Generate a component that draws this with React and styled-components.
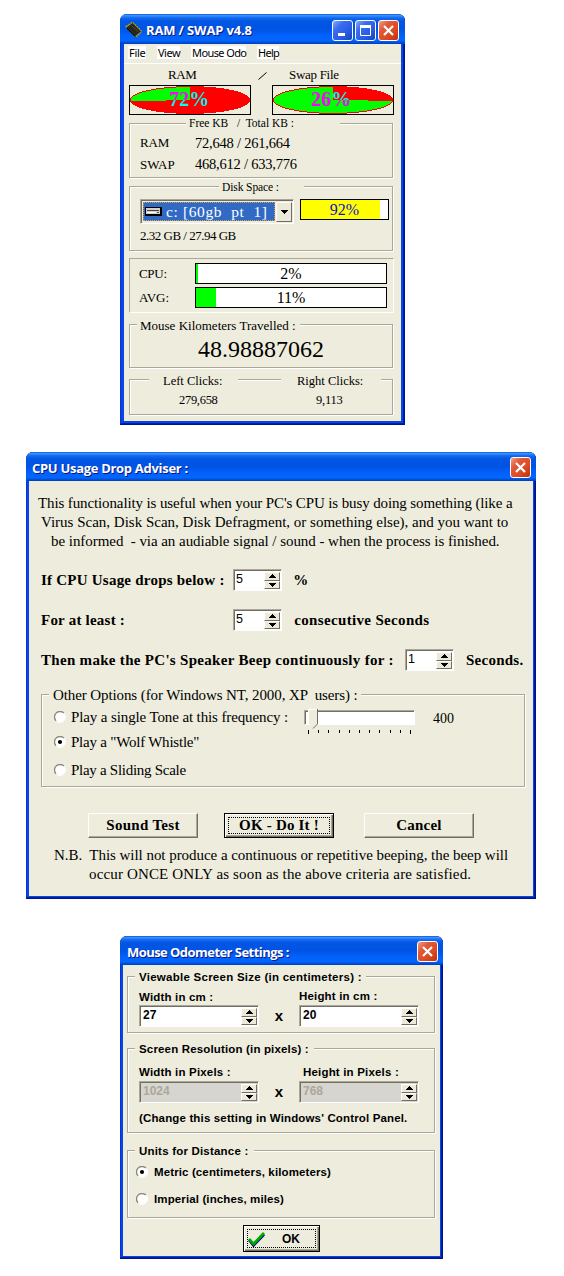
import React from "react";
import styled, { createGlobalStyle, css } from "styled-components";

const FACE = "#eeeddd";
const LINE = "#aca899";

const Global = createGlobalStyle`
  *, *::before, *::after { box-sizing: border-box; }
  body { margin: 0; background: #fff; color: #000; font-family: "Liberation Serif", "Times New Roman", serif; }
`;

const Page = styled.main`
  width: 564px;
  height: 1276px;
  padding-top: 14px;
  overflow: hidden;
`;

const Window = styled.section`
  width: ${(p) => p.$w}px;
  height: ${(p) => p.$h}px;
  margin: 0 0 ${(p) => p.$after || 0}px ${(p) => p.$left}px;
  padding: 0 ${(p) => p.$edge}px ${(p) => p.$edge}px;
  border-radius: 7px 7px 0 0;
  overflow: hidden;
  background: #0546e4;
  box-shadow: inset -1px -1px 0 #00138c, inset 1px 0 0 #0831d9, inset -2px -2px 0 #001ea0;
`;

const TitleBar = styled.header`
  display: flex;
  align-items: center;
  height: ${(p) => p.$h}px;
  margin: 0 -${(p) => p.$edge}px;
  padding: ${(p) => p.$pad};
  color: #fff;
  background: linear-gradient(180deg, #0a53d6 0, #3a93ff 5%, #1469f0 13%, #0256e2 24%, #0054e3 50%, #0261fb 72%, #0266ff 88%, #0050d8 95%, #003bb8 100%);
`;

const TitleText = styled.h1`
  flex: 1;
  margin: 0;
  font: 700 13px/18px "Open Sans", sans-serif;
  letter-spacing: ${(p) => p.$ls}px;
  padding-left: ${(p) => p.$gap || 0}px;
  white-space: pre;
  text-shadow: 1px 1px 0 #0a1883;
`;

const CaptionButton = styled.button`
  display: grid;
  place-items: center;
  width: 21px;
  height: 21px;
  margin: 0 0 0 2px;
  padding: 0;
  border: 1px solid #fff;
  border-radius: 3px;
  background: ${(p) =>
    p.$close
      ? "linear-gradient(135deg, #f0a088 0, #e1593a 30%, #dc4a22 65%, #b93210 100%)"
      : "linear-gradient(135deg, #87aef8 0, #3a6df0 30%, #2a5ce4 65%, #1941b8 100%)"};
`;

const Body = styled.div`
  height: calc(100% - ${(p) => p.$title}px);
  padding: ${(p) => p.$pad};
  background: ${FACE};
`;

const Menu = styled.nav`
  display: flex;
  align-items: flex-start;
  gap: 11px;
  height: 20px;
  margin: 0 -5px;
  padding: 2px 0 0 4px;
  border-bottom: 1px solid #fff;
`;

const MenuItem = styled.a`
  width: ${(p) => p.$w}px;
  height: 13px;
  padding-left: 1px;
  background: #fff;
  font: 11px/13px "Noto Sans", sans-serif;
  letter-spacing: ${(p) => p.$ls}px;
  white-space: nowrap;
`;

const sans = css`
  font-family: "Liberation Sans", Arial, sans-serif;
`;

const Text = styled.span`
  flex: none;
  display: block;
  width: ${(p) => (p.$w ? p.$w + "px" : "auto")};
  font-size: ${(p) => p.$size || 13}px;
  font-weight: ${(p) => (p.$bold ? 700 : 400)};
  letter-spacing: ${(p) => p.$ls || 0}px;
  white-space: pre;
  ${(p) => p.$sans && sans}
`;

const Row = styled.div`
  display: flex;
  align-items: ${(p) => p.$align || "center"};
  height: ${(p) => p.$h}px;
  line-height: ${(p) => p.$lh || p.$h}px;
  margin-top: ${(p) => p.$top || 0}px;
  padding-left: ${(p) => p.$left || 0}px;
`;

const Group = styled.div`
  width: ${(p) => p.$w}px;
  height: ${(p) => p.$h}px;
  margin-top: ${(p) => p.$top || 0}px;
  border: 1px solid ${LINE};
  box-shadow: 1px 1px 0 #fff, inset 1px 1px 0 #fff;
`;

const Legend = styled.div`
  flex: none;
  width: ${(p) => p.$w}px;
  height: ${(p) => p.$h || 14}px;
  line-height: ${(p) => p.$h || 14}px;
  margin: ${(p) => p.$up || 0}px 0 0 ${(p) => p.$left || 0}px;
  padding-left: ${(p) => p.$pad || 0}px;
  background: ${FACE};
`;

const SunkenPanel = styled.div`
  width: 265px;
  height: 55px;
  margin-top: 7px;
  padding: 4px 0 0 9px;
  border: 1px solid;
  border-color: ${LINE} #fff #fff ${LINE};
`;

const Dial = styled.div`
  position: relative;
  width: 122px;
  height: 30px;
  margin-right: 21px;
  border: 1px solid #000;
  isolation: isolate;
  background: ${FACE};
  svg { display: block; }
`;

const DialValue = styled.b`
  position: absolute;
  left: ${(p) => p.$left}px;
  top: 1px;
  font-size: 20px;
  line-height: 24px;
  color: #fff;
  mix-blend-mode: difference;
`;

const Meter = styled.div`
  position: relative;
  flex: none;
  width: ${(p) => p.$w}px;
  height: 21px;
  border: 1px solid #000;
  background: #fff;
  color: ${(p) => p.$ink || "#000"};
  font-size: 16px;
  line-height: ${(p) => p.$lh || 20}px;
  text-align: center;
`;

const MeterFill = styled.div`
  height: 19px;
  background: ${(p) => p.$color};
`;

const MeterText = styled.span`
  position: absolute;
  inset: 0;
`;

const Combo = styled.div`
  display: flex;
  flex: none;
  width: 154px;
  height: 25px;
  margin-right: 6px;
  padding: 1px;
  border: 1px solid;
  border-color: ${LINE} #fff #fff ${LINE};
  background: ${FACE};
  box-shadow: inset 1px 1px 0 #716f64;
`;

const ComboValue = styled.div`
  display: flex;
  align-items: center;
  gap: 4px;
  width: 132px;
  margin: 1px;
  padding-left: 1px;
  border: 1px dotted #e0a040;
  background: #316ac5;
  color: #fff;
  line-height: 18px;
`;

const ComboArrow = styled.div`
  display: grid;
  place-items: center;
  width: 16px;
  height: 20px;
  margin-top: 1px;
  border: 1px solid;
  border-color: #fff #716f64 #716f64 #fff;
  background: #ece9d8;
`;

const Spin = styled.div`
  display: flex;
  justify-content: space-between;
  flex: none;
  width: ${(p) => p.$w}px;
  height: 22px;
  padding: 1px 1px 1px ${(p) => (p.$w > 100 ? 3 : 2)}px;
  border: 1px solid;
  border-color: ${LINE} #fff #fff ${LINE};
  background: ${(p) => (p.$off ? "#d6d5cf" : "#fff")};
  color: ${(p) => (p.$off ? LINE : "#000")};
  box-shadow: inset 1px 1px 0 #716f64;
  line-height: 16px;
`;

const SpinButtons = styled.div`
  display: flex;
  flex-direction: column;
  width: 16px;
  padding-top: 1px;
`;

const SpinButton = styled.div`
  display: grid;
  place-items: center;
  height: 9px;
  border: 1px solid;
  border-color: #fff #716f64 #716f64 #fff;
  background: #ece9d8;
`;

const RadioRow = styled.label`
  display: flex;
  align-items: center;
  flex: none;
  height: ${(p) => p.$h}px;
  line-height: ${(p) => p.$h}px;
  width: ${(p) => (p.$w ? p.$w + "px" : "auto")};
  margin-top: ${(p) => p.$top || 0}px;
  padding-left: ${(p) => p.$left}px;
  svg { margin-right: ${(p) => p.$gap || 5}px; }
`;

const Slider = styled.div`
  flex: none;
  width: 111px;
  margin: 3px 18px 0 0;
`;

const SliderTrack = styled.div`
  position: relative;
  height: 15px;
  border: 1px solid;
  border-color: ${LINE} #fff #fff ${LINE};
  background: #fff;
  box-shadow: inset 1px 1px 0 #716f64;
`;

const Thumb = styled.svg`
  position: absolute;
  left: 3px;
  top: -2px;
`;

const Ticks = styled.div`
  display: flex;
  justify-content: space-between;
  width: 103px;
  margin: 5px 0 0 4px;
`;

const Tick = styled.i`
  width: 1px;
  height: ${(p) => (p.$tall ? 4 : 3)}px;
  background: #000;
`;

const SliderValue = styled(Text)`
  line-height: 24px;
`;

const RaisedText = styled(Text)`
  padding-bottom: 2px;
`;

const Intro = styled.div`
  margin-left: -3px;
`;

const Button = styled.button`
  display: flex;
  align-items: center;
  justify-content: center;
  flex: none;
  width: ${(p) => p.$w || 110}px;
  height: ${(p) => p.$h || 25}px;
  margin: 0 ${(p) => p.$after || 0}px 0 0;
  padding: 0;
  border: 1px solid;
  border-color: #fff #716f64 #716f64 #fff;
  background: ${FACE};
  box-shadow: inset -1px -1px 0 ${LINE};
  color: #000;
  font-family: inherit;
  ${(p) =>
    p.$focus &&
    css`
      border-color: #000;
      box-shadow: inset 1px 1px 0 #fff, inset -1px -1px 0 #716f64, inset -2px -2px 0 ${LINE};
    `}
`;

const FocusRing = styled.span`
  display: flex;
  align-items: center;
  justify-content: ${(p) => (p.$start ? "flex-start" : "center")};
  gap: 17px;
  width: calc(100% - 6px);
  height: calc(100% - 6px);
  border: 1px dotted #000;
`;

const CloseGlyph = () => (
  <svg width="13" height="13" viewBox="0 0 13 13">
    <path d="M2 2 L11 11 M11 2 L2 11" stroke="#fff" strokeWidth="2.2" />
  </svg>
);

const Chip = () => (
  <svg width="18" height="18" viewBox="0 0 18 18">
    <path d="M1.5 5.5 L7.5 1.5 L16.5 10.5 L10.5 16 Z" fill="#d8c020" stroke="#b09c10" strokeDasharray="1.4 1.2" strokeWidth="2" />
    <path d="M2 6 L7.5 2 L16 10.5 L10.5 15 Z" fill="#26261c" />
    <path d="M2 6 L10.5 15 V16.5 L2 8 Z" fill="#000" />
    <path d="M6.5 4.5 L13.5 11" stroke="#4c4c42" strokeWidth="1" />
  </svg>
);

const Pie = ({ free }) => {
  const a = (1 - free) * Math.PI * 2;
  const x = 60 + 60 * Math.sin(a);
  const y = 14 - 13.5 * Math.cos(a);
  return (
    <svg width="120" height="28" viewBox="0 0 120 28" shapeRendering="crispEdges">
      <ellipse cx="60" cy="14" rx="60" ry="13.5" fill="#f00" />
      <path d={`M60 14 L${x} ${y} A60 13.5 0 ${free > 0.5 ? 1 : 0} 1 60 .5 Z`} fill="#0f0" />
      <ellipse cx="60" cy="14" rx="59.5" ry="13.4" fill="none" stroke="#f00" />
    </svg>
  );
};

const Drive = () => (
  <svg width="17" height="9" viewBox="0 0 17 9" shapeRendering="crispEdges">
    <rect width="17" height="9" rx="1" fill="#000" />
    <rect x="1" y="1" width="14" height="6" fill="#d4d0c8" />
    <rect x="2" y="3" width="12" height="1" fill="#444" />
    <rect x="2" y="5" width="9" height="1" fill="#fff" />
    <rect x="12" y="5" width="2" height="1" fill="#555" />
  </svg>
);

const Slash = styled.svg`
  margin: 2px 22px 0 0;
`;

const Arrow = ({ up }) => (
  <svg width="7" height="4" viewBox="0 0 7 4" shapeRendering="crispEdges">
    <path d={up ? "M0 4 L3.5 0 L7 4 Z" : "M0 0 L7 0 L3.5 4 Z"} fill="#000" />
  </svg>
);

const RadioDot = ({ on }) => (
  <svg width="12" height="12" viewBox="0 0 12 12">
    <circle cx="6" cy="6" r="5" fill="#fff" />
    <path d="M2.1 9.9 A5.5 5.5 0 0 1 9.9 2.1" fill="none" stroke="#8a877a" strokeWidth="1.3" />
    <path d="M9.9 2.1 A5.5 5.5 0 0 1 2.1 9.9" fill="none" stroke="#fff" strokeWidth="1" />
    {on && <circle cx="6" cy="6" r="2.1" fill="#000" />}
  </svg>
);

const Check = () => (
  <svg width="17" height="16" viewBox="0 0 17 16">
    <path d="M1 9 L5.5 14.5 L16 3.5" fill="none" stroke="#000080" strokeWidth="2.6" />
    <path d="M1 8 L5.5 13 L16 2" fill="none" stroke="#00a800" strokeWidth="2.8" />
  </svg>
);

const Spinner = ({ value, w = 49, off, bold }) => (
  <Spin $w={w} $off={off}>
    <Text $sans $size={bold ? 12 : 12.5} $bold={bold}>{value}</Text>
    <SpinButtons>
      <SpinButton><Arrow up /></SpinButton>
      <SpinButton><Arrow /></SpinButton>
    </SpinButtons>
  </Spin>
);

const Times = () => <Text $w={40} $sans $bold $size={15} $ls={-0.2}>{"    x"}</Text>;

const Close = () => (
  <CaptionButton $close aria-label="Close"><CloseGlyph /></CaptionButton>
);

const RamWindow = () => (
  <Window $w={285} $h={411} $left={120} $after={27} $edge={4}>
    <TitleBar $h={30} $edge={4} $pad="2px 6px 0 5px">
      <Chip />
      <TitleText $ls={-0.15} $gap={3}>RAM / SWAP v4.8</TitleText>
      <CaptionButton aria-label="Minimize">
        <svg width="13" height="13"><rect x="2" y="9" width="7" height="3" fill="#fff" /></svg>
      </CaptionButton>
      <CaptionButton aria-label="Maximize">
        <svg width="13" height="13"><path d="M1.5 1 V11.5 H11.5 V1" fill="none" stroke="#fff" /><rect x="1" y="1" width="11" height="3" fill="#fff" /></svg>
      </CaptionButton>
      <Close />
    </TitleBar>
    <Body $title={30} $pad="0 5px">
      <Menu>
        <MenuItem $w={18} $ls={-0.3}>File</MenuItem>
        <MenuItem $w={23} $ls={-0.5}>View</MenuItem>
        <MenuItem $w={55} $ls={-0.6}>Mouse Odo</MenuItem>
        <MenuItem $w={22} $ls={-0.7}>Help</MenuItem>
      </Menu>
      <Row $h={21} $lh={23} $left={39}>
        <Text $w={90} $size={13} $ls={-0.4}>RAM</Text>
        <Slash width="9" height="8"><path d="M.5 7.5 L8.5 .5" stroke="#000" /></Slash>
        <Text $size={13} $ls={-0.3}>Swap File</Text>
      </Row>
      <Row $h={30}>
        <Dial><Pie free={0.265} /><DialValue $left={39}>72%</DialValue></Dial>
        <Dial><Pie free={0.74} /><DialValue $left={38}>26%</DialValue></Dial>
      </Row>
      <Group $w={264} $h={55} $top={8}>
        <Legend $w={154} $left={56} $up={-8} $pad={3}><Text $size={11.5}>{"Free KB   /  Total KB :"}</Text></Legend>
        <Row $h={22} $top={2} $left={10}><Text $w={55} $ls={-0.2}>RAM</Text><Text $size={14.5} $ls={-0.22}>72,648 / 261,664</Text></Row>
        <Row $h={21} $left={10}><Text $w={55}>SWAP</Text><Text $size={14.5} $ls={-0.22}>468,612 / 633,776</Text></Row>
      </Group>
      <Group $w={264} $h={65} $top={8}>
        <Legend $w={85} $left={89} $up={-7} $pad={3}><Text $size={11.5} $ls={-0.1}>Disk Space :</Text></Legend>
        <Row $h={24} $top={5} $left={10} $align="flex-start">
          <Combo>
            <ComboValue><Drive /><Text $size={15.5} $ls={0.62}>c: [60gb  pt  1]</Text></ComboValue>
            <ComboArrow><Arrow /></ComboArrow>
          </Combo>
          <Meter $w={89} $lh={19} $ink="#1010d0"><MeterFill $color="#ff0" style={{ width: "91%" }} /><MeterText>92%</MeterText></Meter>
        </Row>
        <Row $h={22} $top={2} $left={10}><Text $size={13} $ls={-0.5}>2.32 GB / 27.94 GB</Text></Row>
      </Group>
      <SunkenPanel>
        <Row $h={21}><Text $w={56} $ls={-0.3}>CPU:</Text><Meter $w={192}><MeterFill $color="#0f0" style={{ width: "1.2%" }} /><MeterText>2%</MeterText></Meter></Row>
        <Row $h={21} $top={3}><Text $w={56}>AVG:</Text><Meter $w={192}><MeterFill $color="#0f0" style={{ width: "10.6%" }} /><MeterText>11%</MeterText></Meter></Row>
      </SunkenPanel>
      <Group $w={264} $h={44} $top={11}>
        <Legend $w={163} $h={16} $left={7} $up={-7} $pad={3}><Text $size={13}>Mouse Kilometers Travelled :</Text></Legend>
        <Row $h={30} $left={68}><Text $size={24}>48.98887062</Text></Row>
      </Group>
      <Group $w={264} $h={36} $top={11}>
        <Row $h={16} $top={-7}>
          <Legend $w={89} $h={16} $left={19} $pad={14}><Text $size={12.5}>Left Clicks:</Text></Legend>
          <Legend $w={100} $h={16} $left={43} $pad={16}><Text $size={12.5}>Right Clicks:</Text></Legend>
        </Row>
        <Row $h={20} $top={1} $left={49}><Text $w={137} $size={12.5} $ls={-0.3}>279,658</Text><Text $size={12.5} $ls={-0.2}>9,113</Text></Row>
      </Group>
    </Body>
  </Window>
);

const AdviserWindow = () => (
  <Window $w={510} $h={447} $left={26} $after={37} $edge={3}>
    <TitleBar $h={29} $edge={3} $pad="2px 5px 0 6px">
      <TitleText $ls={-0.3}>CPU Usage Drop Adviser :</TitleText>
      <Close />
    </TitleBar>
    <Body $title={29} $pad="13px 0 0 12px">
      <Intro>
        <Row $h={19}><Text $size={15} $ls={-0.12}>This functionality is useful when your PC's CPU is busy doing something (like a</Text></Row>
        <Row $h={19} $left={3}><Text $size={15}>Virus Scan, Disk Scan, Disk Defragment, or something else), and you want to</Text></Row>
        <Row $h={19} $left={13}><Text $size={15} $ls={-0.05}>be informed  - via an audiable signal / sound - when the process is finished.</Text></Row>
      </Intro>
      <Row $h={22} $top={18}><Text $w={192} $size={15} $ls={0.23} $bold>If CPU Usage drops below :</Text><Spinner value="5" /><Text $size={15} $bold>{"   %"}</Text></Row>
      <Row $h={22} $top={18}><Text $w={192} $size={15} $ls={0.22} $bold>For at least :</Text><Spinner value="5" /><Text $size={15} $ls={0.34} $bold>{"   consecutive Seconds"}</Text></Row>
      <Row $h={22} $top={18}><Text $w={364} $size={15} $ls={0.3} $bold>Then make the PC's Speaker Beep continuously for :</Text><Spinner value="1" /><Text $size={15} $ls={0.25} $bold>{"   Seconds."}</Text></Row>
      <Group $w={484} $h={93} $top={23}>
        <Legend $w={312} $h={16} $left={7} $up={-8} $pad={4}><Text $size={15} $ls={-0.1}>{"Other Options (for Windows NT, 2000, XP  users) :"}</Text></Legend>
        <Row $h={25} $lh={20} $top={4} $align="flex-start">
          <RadioRow $h={20} $w={262} $left={12}><RadioDot /><Text $size={15} $ls={-0.12}>Play a single Tone at this frequency :</Text></RadioRow>
          <Slider>
            <SliderTrack>
              <Thumb width="10" height="20" viewBox="0 0 10 20">
                <path d="M.5 .5 H9 V14.5 L5 19 L.5 14.5 Z" fill={FACE} />
                <path d="M.5 15 V.5 H9" fill="none" stroke="#fff" />
                <path d="M9.5 0 V15 L5 19.5" fill="none" stroke="#716f64" />
              </Thumb>
            </SliderTrack>
            <Ticks>{Array.from({ length: 11 }, (_, i) => <Tick key={i} $tall={i % 10 === 0} />)}</Ticks>
          </Slider>
          <SliderValue $size={14}>400</SliderValue>
        </Row>
        <RadioRow $h={20} $left={12}><RadioDot on /><Text $size={15} $ls={-0.22}>Play a "Wolf Whistle"</Text></RadioRow>
        <RadioRow $h={20} $top={8} $left={12}><RadioDot /><Text $size={15} $ls={-0.28}>Play a Sliding Scale</Text></RadioRow>
      </Group>
      <Row $h={25} $top={26} $left={47}>
        <Button $after={26}><Text $size={15} $ls={0.3} $bold>Sound Test</Text></Button>
        <Button $focus $after={30}><FocusRing><Text $size={15} $ls={0.2} $bold>OK - Do It !</Text></FocusRing></Button>
        <Button><Text $size={15} $ls={0.2} $bold>Cancel</Text></Button>
      </Row>
      <Row $h={19} $top={8} $left={13}><Text $size={15} $ls={-0.04}>N.B.  This will not produce a continuous or repetitive beeping, the beep will</Text></Row>
      <Row $h={19} $left={48}><Text $size={15} $ls={0.15}>occur ONCE ONLY as soon as the above criteria are satisfied.</Text></Row>
    </Body>
  </Window>
);

const OdometerWindow = () => (
  <Window $w={323} $h={323} $left={120} $edge={3}>
    <TitleBar $h={29} $edge={3} $pad="2px 5px 0 7px">
      <TitleText $ls={-0.55}>Mouse Odometer Settings :</TitleText>
      <Close />
    </TitleBar>
    <Body $title={29} $pad="11px 0 0 4px">
      <Group $w={308} $h={57}>
        <Legend $w={231} $left={7} $up={-7} $pad={4}><Text $sans $bold $size={11.5} $ls={0.26}>Viewable Screen Size (in centimeters) :</Text></Legend>
        <Row $h={14} $top={6} $left={11}><Text $w={160} $sans $bold $size={11.5} $ls={0.17}>Width in cm :</Text><RaisedText $sans $bold $size={11.5} $ls={0.17}>Height in cm :</RaisedText></Row>
        <Row $h={22} $top={1} $left={11}>
          <Spinner value="27" w={120} bold /><Times /><Spinner value="20" w={120} bold />
        </Row>
      </Group>
      <Group $w={308} $h={85} $top={15}>
        <Legend $w={179} $left={7} $up={-7} $pad={4}><Text $sans $bold $size={11.5} $ls={0.16}>Screen Resolution (in pixels) :</Text></Legend>
        <Row $h={14} $top={9} $left={11}><Text $w={164} $sans $bold $size={11.5} $ls={0.18}>Width in Pixels :</Text><Text $sans $bold $size={11.5} $ls={0.18}>Height in Pixels :</Text></Row>
        <Row $h={22} $top={2} $left={11}>
          <Spinner value="1024" w={120} bold off /><Times /><Spinner value="768" w={120} bold off />
        </Row>
        <Row $h={14} $top={8} $left={11}><Text $sans $bold $size={11.5} $ls={0.15}>(Change this setting in Windows' Control Panel.</Text></Row>
      </Group>
      <Group $w={308} $h={68} $top={17}>
        <Legend $w={119} $left={7} $up={-7} $pad={4}><Text $sans $bold $size={11.5} $ls={0.2}>Units for Distance :</Text></Legend>
        <RadioRow $h={14} $top={7} $left={8} $gap={6}><RadioDot on /><Text $sans $bold $size={11.5} $ls={0.12}>Metric (centimeters, kilometers)</Text></RadioRow>
        <RadioRow $h={14} $top={13} $left={8} $gap={6}><RadioDot /><Text $sans $bold $size={11.5} $ls={0.12}>Imperial (inches, miles)</Text></RadioRow>
      </Group>
      <Row $h={27} $top={7} $left={116}>
        <Button $w={77} $h={27} $focus><FocusRing $start><Check /><Text $sans $bold $size={12}>OK</Text></FocusRing></Button>
      </Row>
    </Body>
  </Window>
);

export default function App() {
  return (
    <Page>
      <Global />
      <RamWindow />
      <AdviserWindow />
      <OdometerWindow />
    </Page>
  );
}
